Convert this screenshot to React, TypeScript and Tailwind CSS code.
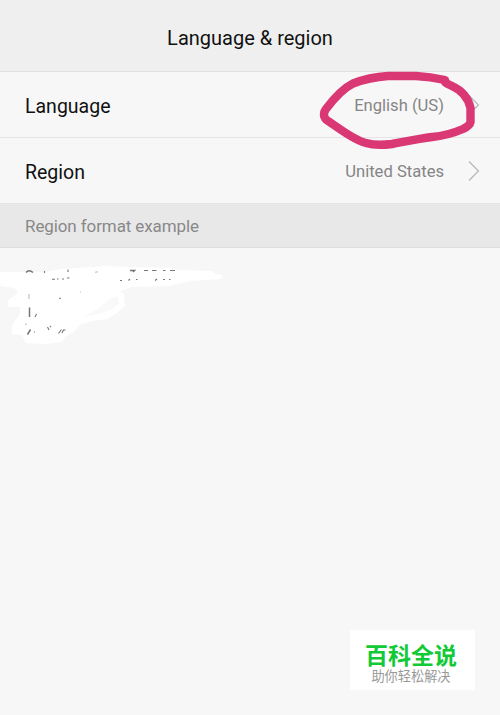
import React from "react";

const rows = [
  { label: "Language", value: "English (US)" },
  { label: "Region", value: "United States" },
];

const Chevron = () => (
  <svg className="w-3 h-5 shrink-0 -mt-[3px]" viewBox="0 0 12 20" fill="none" stroke="#b4b4b4" strokeWidth="1.1">
    <path d="M1 0.5 L10.5 10 L1 19.5" />
  </svg>
);

// Hand-drawn ring around the selected language
const Highlight = () => (
  <svg className="absolute left-[310px] top-[-7px] w-[180px] h-[90px] pointer-events-none" viewBox="310 65 180 90" fill="none">
    <path
      d="M445 80 C436 78 426 76.5 416 76 H388 C373 77 362 80 353 83.5 C342 89 332 101 326 109 C323 113 323 118 328 121 C339 128 353 140 366 143 C374 145.5 384 145 392 144 C408 141 420 138.5 432 137 C444 136 456 132 463 129 C467 127 470 125 470.5 122 V108 C468 97 461 90 452 86 C449 84.5 447 84 445 82"
      stroke="#d93875"
      strokeWidth="8.4"
      strokeLinecap="round"
      strokeLinejoin="round"
    />
  </svg>
);

// Sample date and number lines, mostly painted over in white
const ScribbledExample = () => (
  <svg className="block w-60 h-[102px]" viewBox="0 248 240 102" fill="none">
    <path
      d="M0 272 L26 272 L45 272 L62 269 L80 268 L104 266 L130 267 L172 268 L178 270 L212 271 L215 274 L222 275 L221 279 L190 281 L170 286 L132 287 L120 291 L124 294 L125 306 L118 312 L108 319 L92 321 L80 325 L72 333 L66 336 L62 342 L45 344 L26 343 L22 335 L12 334 L12 325 L20 314 L20 307 L8 307 L8 300 L18 293 L15 288 L0 286 Z"
      fill="#fff"
    />
    <path d="M84 317 L99 308 L110 299 L117 296 L119 303 L112 309 L99 314 Z" fill="#f9f9f9" />
    <g stroke="#777" strokeWidth="1.1">
      <path d="M26 272.5 Q29 269 33 272.5" strokeWidth="1.4" />
      <path d="M44.5 271 V273 M68 269.5 V272" />
      <path d="M52 279.3 H55 M57 279 H58.5 M62 279 H64 M67 278 H69.5" />
      <path d="M95 272.3 L98 271.8" stroke="#bbb" />
      <path d="M130 270.5 H134.5 L133 272" strokeWidth="1.5" />
      <path d="M144 270.5 H148 M152 270.5 H156.5 M163 270.5 H165.5 M170 270.5 H175" />
      <path d="M120 280.5 H122 M128.5 280.5 L130 279 M136 279.5 H137.5 M155 280.5 L157 279 M163 279.5 H165 M169 279.5 H170.5" />
      <path d="M29 294 V299 M80 292 H81" stroke="#bbb" />
      <path d="M59 298.3 H61" />
      <path d="M29.5 307.5 V317" strokeWidth="1.5" />
      <path d="M36.5 314 L35 317" />
      <path d="M25 324.3 H27 M34.5 331 V333" stroke="#bbb" />
      <path d="M30.5 329.5 L27.5 334.5" strokeWidth="1.5" />
      <path d="M47.5 327 L49 330 M51 326 L50 327" />
      <path d="M61.5 329.5 L58.5 333.5 M62 333 L63.5 330 H65.5" />
    </g>
  </svg>
);

const App = () => {
  return (
    <div className="relative flex flex-col h-[715px] w-[500px] overflow-hidden bg-[#f7f7f7] font-['Roboto',sans-serif]">
      <header className="flex h-[72px] shrink-0 items-center justify-center border-b border-[#e0e0e0] bg-[#efefef] pt-[5px]">
        <h1 className="text-[20px] leading-6 text-[#111]">Language &amp; region</h1>
      </header>

      <div className="relative shrink-0">
        {rows.map((row) => (
          <div key={row.label} className="flex h-[66px] items-center border-b border-[#e4e4e4] pl-[25px] pr-5 pt-[4px]">
            <span className="flex-1 text-[19.5px] text-[#111]">{row.label}</span>
            <span className="mr-6 text-[16.6px] text-[#858585]">{row.value}</span>
            <Chevron />
          </div>
        ))}
        <Highlight />
      </div>

      <div className="flex h-11 shrink-0 items-center border-b border-[#dedede] bg-[#e8e8e8] pl-[25px] pt-[3px]">
        <span className="text-[17px] tracking-[-0.1px] text-[#888]">Region format example</span>
      </div>

      <ScribbledExample />

      <div className="absolute left-[350px] top-[630px] flex h-[60px] w-[125px] flex-col items-center bg-white pt-[10px] pr-[3px] font-['Noto_Sans_CJK_SC',sans-serif]">
        <span className="text-[23px] font-bold leading-[28px] text-[#12c937]">百科全说</span>
        <span className="text-[13.2px] leading-4 text-[#999]">助你轻松解决</span>
      </div>
    </div>
  );
};

export default App;
